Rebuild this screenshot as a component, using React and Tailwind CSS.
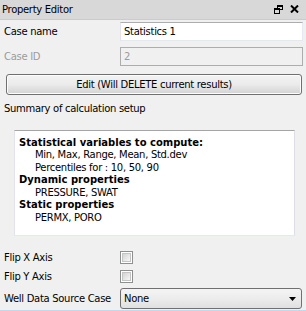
import React from 'react'

const font = { fontFamily: "'DejaVu Sans', sans-serif" }

function FloatIcon() {
    return (
        <svg width="9" height="9" viewBox="0 0 9 9" className="block">
            <rect x="3" y="0" width="6" height="2" fill="#000" />
            <rect x="3" y="0" width="1" height="5" fill="#000" />
            <rect x="8" y="0" width="1" height="5" fill="#000" />
            <rect x="3" y="4" width="6" height="1" fill="#000" />
            <rect x="0" y="3" width="6" height="2" fill="#000" />
            <rect x="0" y="3" width="1" height="6" fill="#000" />
            <rect x="5" y="3" width="1" height="6" fill="#000" />
            <rect x="0" y="8" width="6" height="1" fill="#000" />
        </svg>
    )
}

function CloseIcon() {
    return (
        <svg width="9" height="8" viewBox="0 0 9 8" className="block">
            <path d="M1 0.5 L8 7.5 M8 0.5 L1 7.5" stroke="#000" strokeWidth="2" />
        </svg>
    )
}

function Checkbox() {
    return (
        <div className="w-[13px] h-[13px] border border-[#8e8f8f] bg-white p-[1px]">
            <div className="w-full h-full border border-[#c4c4c4] bg-linear-to-br from-[#d4d4d4] to-[#f7f7f7]" />
        </div>
    )
}

export default function App() {
    return (
        <div className="w-[306px] h-[311px] bg-[#f0f0f0] overflow-hidden flex flex-col text-[10px] text-black tracking-[-0.3px]" style={font}>
            {/* Title bar */}
            <div className="h-[20px] bg-[#d8d8d8] border-b border-[#cbcbcb] flex items-center pl-[2px] pr-[7px]">
                <span className="flex-1">Property Editor</span>
                <div className="flex items-center gap-[7px]">
                    <FloatIcon />
                    <CloseIcon />
                </div>
            </div>

            <div className="mt-[2px] h-[19px] flex items-center">
                <span className="w-[120px] pl-[4px]">Case name</span>
                <div className="flex-1 mr-[3px] h-full bg-white border border-[#e3e9ef] border-t-[#abadb3] border-l-[#e2e3ea] flex items-center pl-[3px]">
                    Statistics 1
                </div>
            </div>

            <div className="mt-[6px] h-[19px] flex items-center text-[#9c9c9c]">
                <span className="w-[120px] pl-[4px]">Case ID</span>
                <div className="flex-1 mr-[3px] h-full bg-[#f0f0f0] border border-[#adadad] flex items-center pl-[3px]">
                    2
                </div>
            </div>

            <button className="mt-[8px] ml-[6px] mr-[4px] h-[21px] border border-[#707070] rounded-[3px] bg-linear-to-b from-[#f3f3f3] via-[#ebebeb] via-50% to-[#d3d3d3] shadow-[inset_0_0_0_1px_#fcfcfc] flex items-center justify-center">
                Edit (Will DELETE current results)
            </button>

            <div className="mt-[7px] h-[13px] leading-[13px] pl-[4px]">Summary of calculation setup</div>

            <div className="mt-[15px] ml-[14px] w-[281px] h-[107px] bg-white border border-[#e3e9ef] border-t-[#a5a5a5] border-l-[#e2e3ea] border-r-[#dbdfe6] pt-[6px] pl-[4px] leading-[12.5px]">
                <div className="font-bold tracking-normal">Statistical variables to compute:</div>
                <div className="pl-[16px]">Min, Max, Range, Mean, Std.dev</div>
                <div className="pl-[16px]">Percentiles for : 10, 50, 90</div>
                <div className="font-bold tracking-normal">Dynamic properties</div>
                <div className="pl-[16px]">PRESSURE, SWAT</div>
                <div className="font-bold tracking-normal">Static properties</div>
                <div className="pl-[16px]">PERMX, PORO</div>
            </div>

            <div className="mt-[12px] h-[19px] flex items-center">
                <span className="w-[120px] pl-[4px]">Flip X Axis</span>
                <Checkbox />
            </div>
            <div className="h-[19px] flex items-center">
                <span className="w-[120px] pl-[4px]">Flip Y Axis</span>
                <Checkbox />
            </div>

            <div className="mt-[2px] h-[21px] flex items-center">
                <span className="w-[120px] pl-[4px]">Well Data Source Case</span>
                <div className="flex-1 mr-[4px] h-full border border-[#707070] rounded-[3px] bg-linear-to-b from-[#f4f4f4] via-[#ececec] via-50% to-[#e0e0e0] flex items-center pl-[3px] pr-[5px]">
                    <span className="flex-1">None</span>
                    <svg width="7" height="4" viewBox="0 0 7 4" className="block">
                        <path d="M0 0 H7 L3.5 4 Z" fill="#000" />
                    </svg>
                </div>
            </div>

            <div className="mt-[1px] h-[1px] bg-[#c4d7ee]" />
        </div>
    )
}
